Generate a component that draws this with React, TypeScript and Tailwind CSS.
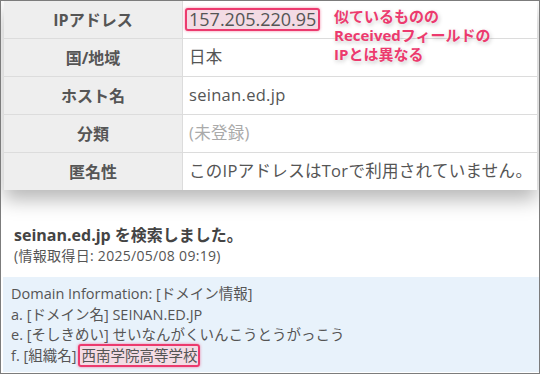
import React from "react";

// One row of the lookup result table
interface InfoRow {
  label: string;
  value: React.ReactNode;
}

const font = { fontFamily: '"Open Sans", "Noto Sans CJK JP", sans-serif' };

const Marker: React.FC<{ children: React.ReactNode; className?: string }> = ({ children, className }) => (
  <span
    className={
      "rounded-[3px] border-2 border-[#ec3a6e] bg-[#f3dbe4] shadow-[0_0_3px_rgba(236,58,110,0.6)] " +
      (className ?? "")
    }
  >
    {children}
  </span>
);

const rows: InfoRow[] = [
  {
    label: "IPアドレス",
    value: (
      <Marker className="ml-[-4px] px-[2px] text-[18px] leading-[19px] tracking-normal">157.205.220.95</Marker>
    ),
  },
  { label: "国/地域", value: "日本" },
  { label: "ホスト名", value: "seinan.ed.jp" },
  { label: "分類", value: <span className="text-[#aaa]">(未登録)</span> },
  { label: "匿名性", value: "このIPアドレスはTorで利用されていません。" },
];

const App: React.FC = () => {
  return (
    <div
      className="relative w-[540px] h-[374px] overflow-hidden bg-white border border-[#7c7c7c] text-[#555]"
      style={font}
    >
      {/* result table */}
      <div className="ml-[3px] mr-[2px] mt-[-1px] bg-white shadow-[0_10px_18px_rgba(0,0,0,0.28)]">
        {rows.map((row) => (
          <div key={row.label} className="flex h-[38px] border-t border-[#dcdcdc]">
            <div className="w-[179px] shrink-0 flex items-center justify-center bg-[#eeeeee] border-r border-[#dcdcdc] font-bold text-[16px] text-[#555]">
              {row.label}
            </div>
            <div className="flex items-center pl-[6px] text-[16.5px] tracking-[0.3px]">{row.value}</div>
          </div>
        ))}
      </div>

      {/* annotation over the table */}
      <div className="absolute left-[333px] top-[6px] text-[15px] leading-[19px] font-bold text-[#ec3a6e] [text-shadow:0_0_3px_#fff,1px_2px_4px_rgba(0,0,0,0.25)]">
        <div>似ているものの</div>
        <div>Receivedフィールドの</div>
        <div>IPとは異なる</div>
      </div>

      <div className="pl-[13px] pt-[35px]">
        <div className="font-bold text-[16px] text-[#444] leading-[20px]">seinan.ed.jp を検索しました。</div>
        <div className="text-[14px] leading-[20px] tracking-[0.3px] mt-[1px]">(情報取得日: 2025/05/08 09:19)</div>
      </div>

      {/* whois excerpt */}
      <div className="mt-[11px] ml-[2px] bg-[#e8f2fb] pl-[8px] pt-[7px] pb-[6px] text-[14.5px] leading-[20.5px]">
        <div>Domain Information: [ドメイン情報]</div>
        <div>a. [ドメイン名] SEINAN.ED.JP</div>
        <div>e. [そしきめい] せいなんがくいんこうとうがっこう</div>
        <div>
          f. [組織名]<Marker className="ml-[2px] px-[1px]">西南学院高等学校</Marker>
        </div>
      </div>
    </div>
  );
};

export default App;
